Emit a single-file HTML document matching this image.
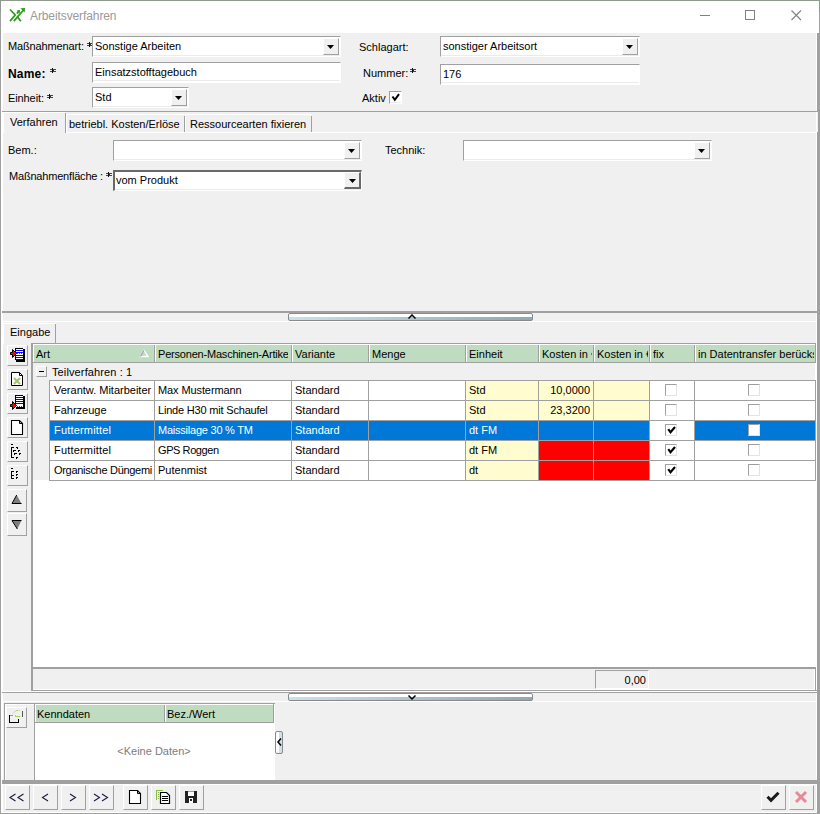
<!DOCTYPE html><html><head><meta charset="utf-8"><style>
*{margin:0;padding:0}
html,body{width:820px;height:814px;overflow:hidden;background:#8e9a8e;position:relative;font-family:"Liberation Sans",sans-serif;font-size:11px;color:#000}
div{position:absolute}
.t{white-space:nowrap;line-height:13px;font-size:11px}
</style></head><body>
<div style="left:1px;top:1px;width:818px;height:812px;background:#fff"></div>
<div style="left:0px;top:12px;width:1px;height:802px;background:#a0a0a0"></div>
<div style="left:819px;top:12px;width:1px;height:802px;background:#a0a0a0"></div>
<div style="left:817px;top:33px;width:2px;height:781px;background:#a0a0a0"></div>
<div style="left:0px;top:813px;width:820px;height:1px;background:#a0a0a0"></div>
<div style="left:3px;top:33px;width:813px;height:779px;background:#f0f0f0"></div>
<svg width="30" height="30" style="position:absolute;left:0;top:0">
<g stroke="#2f9b1f" stroke-width="1.8" fill="none" stroke-linecap="butt">
<path d="M10 9.5L15.2 15L10 21.2"/><path d="M13.8 21.2L23.5 10"/><path d="M17.2 16.5L20.8 21.2"/><path d="M16.8 13.5L19.5 11"/>
</g><path d="M25 8L20.5 8.3L24.7 12.5Z" fill="#2f9b1f"/><path d="M16.5 10.5L20 10L19.5 13.5Z" fill="#2f9b1f"/>
</svg>
<div class="t" style="left:30px;top:9px;font-size:12px;letter-spacing:-0.1px;line-height:15px;color:#9a9a9a">Arbeitsverfahren</div>
<div style="left:700px;top:15px;width:10px;height:1px;background:#808080"></div>
<div style="left:745px;top:10px;width:10px;height:10px;border:1px solid #808080;box-sizing:border-box"></div>
<svg width="12" height="12" style="position:absolute;left:790px;top:9px"><path d="M1.5 1.5L11 11M11 1.5L1.5 11" stroke="#808080" stroke-width="1.1"/></svg>
<div class="t" style="left:8px;top:40px;letter-spacing:-0.14px">Maßnahmenart:</div>
<svg width="6" height="5" style="position:absolute;left:87px;top:42px" shape-rendering="crispEdges"><path d="M2 0h1v5h-1z" fill="#111"/><path d="M0 1h2v1h-2zM3 1h3v1h-3zM0 3h2v1h-2zM3 3h3v1h-3z" fill="#444"/><path d="M3 2h1v1h-1z" fill="#333"/></svg>
<div style="left:92px;top:36px;width:249px;height:21px;background:#fff;border-top:1px solid #a0a0a0;border-left:1px solid #a0a0a0;border-bottom:1px solid #fff;border-right:1px solid #fff;box-sizing:border-box"></div>
<div style="left:93px;top:55px;width:247px;height:1px;background:#ebebeb"></div>
<div style="left:323px;top:38px;width:16px;height:17px;background:#f0f0f0;border-top:1px solid #fff;border-left:1px solid #fff;border-bottom:1px solid #a0a0a0;border-right:1px solid #a0a0a0;box-sizing:border-box"></div>
<svg width="7" height="4" style="position:absolute;left:327px;top:45px"><path d="M0 0H7L3.5 4Z" fill="#000"/></svg>
<div class="t" style="left:95px;top:40px;">Sonstige Arbeiten</div>
<div class="t" style="left:8px;top:67px;font-weight:bold;font-size:12px;line-height:14px;letter-spacing:0.2px">Name:</div>
<svg width="6" height="5" style="position:absolute;left:50px;top:68px" shape-rendering="crispEdges"><path d="M2 0h1v5h-1z" fill="#111"/><path d="M0 1h2v1h-2zM3 1h3v1h-3zM0 3h2v1h-2zM3 3h3v1h-3z" fill="#444"/><path d="M3 2h1v1h-1z" fill="#333"/></svg>
<div style="left:92px;top:62px;width:249px;height:21px;background:#fff;border-top:1px solid #a0a0a0;border-left:1px solid #a0a0a0;border-bottom:1px solid #fff;border-right:1px solid #fff;box-sizing:border-box"></div>
<div style="left:93px;top:80px;width:247px;height:1px;background:#ebebeb"></div>
<div class="t" style="left:95px;top:66px;">Einsatzstofftagebuch</div>
<div class="t" style="left:8px;top:92px;letter-spacing:-0.1px">Einheit:</div>
<svg width="6" height="5" style="position:absolute;left:47px;top:94px" shape-rendering="crispEdges"><path d="M2 0h1v5h-1z" fill="#111"/><path d="M0 1h2v1h-2zM3 1h3v1h-3zM0 3h2v1h-2zM3 3h3v1h-3z" fill="#444"/><path d="M3 2h1v1h-1z" fill="#333"/></svg>
<div style="left:92px;top:87px;width:97px;height:21px;background:#fff;border-top:1px solid #a0a0a0;border-left:1px solid #a0a0a0;border-bottom:1px solid #fff;border-right:1px solid #fff;box-sizing:border-box"></div>
<div style="left:93px;top:106px;width:95px;height:1px;background:#ebebeb"></div>
<div style="left:171px;top:89px;width:16px;height:17px;background:#f0f0f0;border-top:1px solid #fff;border-left:1px solid #fff;border-bottom:1px solid #a0a0a0;border-right:1px solid #a0a0a0;box-sizing:border-box"></div>
<svg width="7" height="4" style="position:absolute;left:175px;top:96px"><path d="M0 0H7L3.5 4Z" fill="#000"/></svg>
<div class="t" style="left:95px;top:91px;">Std</div>
<div class="t" style="left:359px;top:41px;">Schlagart:</div>
<div style="left:440px;top:36px;width:200px;height:21px;background:#fff;border-top:1px solid #a0a0a0;border-left:1px solid #a0a0a0;border-bottom:1px solid #fff;border-right:1px solid #fff;box-sizing:border-box"></div>
<div style="left:441px;top:55px;width:198px;height:1px;background:#ebebeb"></div>
<div style="left:622px;top:38px;width:16px;height:17px;background:#f0f0f0;border-top:1px solid #fff;border-left:1px solid #fff;border-bottom:1px solid #a0a0a0;border-right:1px solid #a0a0a0;box-sizing:border-box"></div>
<svg width="7" height="4" style="position:absolute;left:626px;top:45px"><path d="M0 0H7L3.5 4Z" fill="#000"/></svg>
<div class="t" style="left:443px;top:40px;">sonstiger Arbeitsort</div>
<div class="t" style="left:363px;top:67px;">Nummer:</div>
<svg width="6" height="5" style="position:absolute;left:410px;top:68px" shape-rendering="crispEdges"><path d="M2 0h1v5h-1z" fill="#111"/><path d="M0 1h2v1h-2zM3 1h3v1h-3zM0 3h2v1h-2zM3 3h3v1h-3z" fill="#444"/><path d="M3 2h1v1h-1z" fill="#333"/></svg>
<div style="left:440px;top:64px;width:200px;height:21px;background:#fff;border-top:1px solid #a0a0a0;border-left:1px solid #a0a0a0;border-bottom:1px solid #fff;border-right:1px solid #fff;box-sizing:border-box"></div>
<div style="left:441px;top:82px;width:198px;height:1px;background:#ebebeb"></div>
<div class="t" style="left:443px;top:68px;">176</div>
<div class="t" style="left:362px;top:92px;">Aktiv</div>
<div style="left:389px;top:91px;width:13px;height:13px;background:#fff;border-top:1px solid #a0a0a0;border-left:1px solid #a0a0a0;border-bottom:1px solid #fff;border-right:1px solid #fff;box-sizing:border-box"></div>
<div style="left:390px;top:102px;width:11px;height:1px;background:#ebebeb"></div>
<svg width="9" height="9" style="position:absolute;left:391px;top:93px"><path d="M1.5 3.5L3.8 6.8L8 1.2" stroke="#000" stroke-width="2" fill="none"/></svg>
<div style="left:2px;top:111px;width:817px;height:1px;background:#a0a0a0"></div>
<div style="left:817px;top:112px;width:1px;height:20px;background:#f0f0f0"></div>
<div style="left:65px;top:132px;width:752px;height:1px;background:#fff"></div>
<div style="left:3px;top:112px;width:62px;height:1px;background:#fff"></div>
<div style="left:3px;top:112px;width:1px;height:21px;background:#fff"></div>
<div style="left:65px;top:113px;width:1px;height:20px;background:#a0a0a0"></div>
<div class="t" style="left:10px;top:116px;">Verfahren</div>
<div style="left:66px;top:114px;width:118px;height:1px;background:#fff"></div>
<div style="left:66px;top:114px;width:1px;height:18px;background:#fff"></div>
<div style="left:184px;top:116px;width:1px;height:16px;background:#a0a0a0"></div>
<div class="t" style="left:69px;top:118px;">betriebl. Kosten/Erlöse</div>
<div style="left:185px;top:114px;width:126px;height:1px;background:#fff"></div>
<div style="left:185px;top:114px;width:1px;height:18px;background:#fff"></div>
<div style="left:311px;top:116px;width:1px;height:16px;background:#a0a0a0"></div>
<div class="t" style="left:190px;top:118px;">Ressourcearten fixieren</div>
<div class="t" style="left:8px;top:144px;">Bem.:</div>
<div style="left:113px;top:140px;width:249px;height:21px;background:#fff;border-top:1px solid #a0a0a0;border-left:1px solid #a0a0a0;border-bottom:1px solid #fff;border-right:1px solid #fff;box-sizing:border-box"></div>
<div style="left:114px;top:159px;width:247px;height:1px;background:#ebebeb"></div>
<div style="left:344px;top:142px;width:16px;height:17px;background:#f0f0f0;border-top:1px solid #fff;border-left:1px solid #fff;border-bottom:1px solid #a0a0a0;border-right:1px solid #a0a0a0;box-sizing:border-box"></div>
<svg width="7" height="4" style="position:absolute;left:348px;top:149px"><path d="M0 0H7L3.5 4Z" fill="#000"/></svg>
<div class="t" style="left:385px;top:144px;">Technik:</div>
<div style="left:463px;top:140px;width:249px;height:21px;background:#fff;border-top:1px solid #a0a0a0;border-left:1px solid #a0a0a0;border-bottom:1px solid #fff;border-right:1px solid #fff;box-sizing:border-box"></div>
<div style="left:464px;top:159px;width:247px;height:1px;background:#ebebeb"></div>
<div style="left:694px;top:142px;width:16px;height:17px;background:#f0f0f0;border-top:1px solid #fff;border-left:1px solid #fff;border-bottom:1px solid #a0a0a0;border-right:1px solid #a0a0a0;box-sizing:border-box"></div>
<svg width="7" height="4" style="position:absolute;left:698px;top:149px"><path d="M0 0H7L3.5 4Z" fill="#000"/></svg>
<div class="t" style="left:9px;top:170px;letter-spacing:-0.19px">Maßnahmenfläche :</div>
<svg width="6" height="5" style="position:absolute;left:106px;top:172px" shape-rendering="crispEdges"><path d="M2 0h1v5h-1z" fill="#111"/><path d="M0 1h2v1h-2zM3 1h3v1h-3zM0 3h2v1h-2zM3 3h3v1h-3z" fill="#444"/><path d="M3 2h1v1h-1z" fill="#333"/></svg>
<div style="left:113px;top:170px;width:249px;height:21px;background:#fff;border-top:2px solid #696969;border-left:2px solid #696969;border-bottom:1px solid #fff;border-right:1px solid #fff;box-sizing:border-box"></div>
<div style="left:115px;top:189px;width:246px;height:1px;background:#ebebeb"></div>
<div style="left:344px;top:172px;width:17px;height:17px;background:#f0f0f0;border-top:1px solid #fff;border-left:1px solid #fff;border-bottom:2px solid #696969;border-right:2px solid #696969;box-sizing:border-box"></div>
<svg width="7" height="4" style="position:absolute;left:349px;top:179px"><path d="M0 0H7L3.5 4Z" fill="#000"/></svg>
<div class="t" style="left:116px;top:174px;">vom Produkt</div>
<div style="left:2px;top:311px;width:815px;height:2px;background:#a0a0a0"></div>
<div style="left:2px;top:321px;width:815px;height:1px;background:#fff"></div>
<div style="left:288px;top:313px;width:245px;height:8px;box-sizing:border-box;border:1px solid #8a8a8a;border-radius:2px;background:linear-gradient(to bottom,#fff 0,#fff 3px,transparent 3px),linear-gradient(to right,#c8e2f2,#8ea8b6)"></div>
<svg width="8" height="5" style="position:absolute;left:408px;top:314px"><path d="M0.5 4.5L4 1L7.5 4.5" stroke="#000" stroke-width="1.5" fill="none"/></svg>
<div style="left:3px;top:323px;width:53px;height:21px;background:#f0f0f0;border-left:1px solid #fff;border-top:1px solid #fff;box-sizing:border-box"></div>
<div style="left:55px;top:324px;width:1px;height:19px;background:#a0a0a0"></div>
<div class="t" style="left:10px;top:326px;">Eingabe</div>
<div style="left:31px;top:343px;width:786px;height:349px;background:#fff;border-left:2px solid #a0a0a0;box-sizing:border-box"></div>
<div style="left:31px;top:343px;width:785px;height:1px;background:#a0a0a0"></div>
<div style="left:815px;top:343px;width:1px;height:20px;background:#a0a0a0"></div>
<div style="left:33px;top:344px;width:782px;height:1px;background:#fff"></div>
<div style="left:34px;top:345px;width:781px;height:17px;background:#c0dcc0"></div>
<div style="left:33px;top:362px;width:782px;height:1px;background:#a0a0a0"></div>
<div style="left:154px;top:345px;width:1px;height:17px;background:#a0a0a0"></div>
<div style="left:155px;top:345px;width:1px;height:17px;background:#fff"></div>
<div style="left:291px;top:345px;width:1px;height:17px;background:#a0a0a0"></div>
<div style="left:292px;top:345px;width:1px;height:17px;background:#fff"></div>
<div style="left:368px;top:345px;width:1px;height:17px;background:#a0a0a0"></div>
<div style="left:369px;top:345px;width:1px;height:17px;background:#fff"></div>
<div style="left:465px;top:345px;width:1px;height:17px;background:#a0a0a0"></div>
<div style="left:466px;top:345px;width:1px;height:17px;background:#fff"></div>
<div style="left:538px;top:345px;width:1px;height:17px;background:#a0a0a0"></div>
<div style="left:539px;top:345px;width:1px;height:17px;background:#fff"></div>
<div style="left:593px;top:345px;width:1px;height:17px;background:#a0a0a0"></div>
<div style="left:594px;top:345px;width:1px;height:17px;background:#fff"></div>
<div style="left:649px;top:345px;width:1px;height:17px;background:#a0a0a0"></div>
<div style="left:650px;top:345px;width:1px;height:17px;background:#fff"></div>
<div style="left:694px;top:345px;width:1px;height:17px;background:#a0a0a0"></div>
<div style="left:695px;top:345px;width:1px;height:17px;background:#fff"></div>
<div style="left:34px;top:348px;width:119px;height:13px;overflow:hidden"><div class="t" style="left:2px;top:0;letter-spacing:0px">Art</div></div>
<div style="left:156px;top:348px;width:132px;height:13px;overflow:hidden"><div class="t" style="left:2px;top:0;letter-spacing:-0.2px">Personen-Maschinen-Artikel</div></div>
<div style="left:293px;top:348px;width:74px;height:13px;overflow:hidden"><div class="t" style="left:2px;top:0;letter-spacing:0px">Variante</div></div>
<div style="left:370px;top:348px;width:94px;height:13px;overflow:hidden"><div class="t" style="left:2px;top:0;letter-spacing:0px">Menge</div></div>
<div style="left:467px;top:348px;width:70px;height:13px;overflow:hidden"><div class="t" style="left:2px;top:0;letter-spacing:0px">Einheit</div></div>
<div style="left:540px;top:348px;width:52px;height:13px;overflow:hidden"><div class="t" style="left:2px;top:0;letter-spacing:0px">Kosten in €</div></div>
<div style="left:595px;top:348px;width:53px;height:13px;overflow:hidden"><div class="t" style="left:2px;top:0;letter-spacing:0px">Kosten in €</div></div>
<div style="left:651px;top:348px;width:42px;height:13px;overflow:hidden"><div class="t" style="left:2px;top:0;letter-spacing:0px">fix</div></div>
<div style="left:696px;top:348px;width:118px;height:13px;overflow:hidden"><div class="t" style="left:2px;top:0;letter-spacing:0px">in Datentransfer berücksichtigen</div></div>
<svg width="10" height="9" style="position:absolute;left:139px;top:349px"><path d="M9 7.5H1.5L5 1.5Z" fill="none" stroke="#fff" stroke-width="1.3"/><path d="M1.5 7.5L5 1.5" stroke="#9a9a9a" stroke-width="1.1" fill="none"/></svg>
<div style="left:33px;top:363px;width:782px;height:17px;background:#f0f0f0"></div>
<div style="left:36px;top:366px;width:11px;height:11px;background:#f0f0f0;border-top:1px solid #fff;border-left:1px solid #fff;border-bottom:1px solid #a0a0a0;border-right:1px solid #a0a0a0;box-sizing:border-box"></div>
<div style="left:39px;top:371px;width:5px;height:1px;background:#000"></div>
<div class="t" style="left:52px;top:366px;letter-spacing:0.12px">Teilverfahren : 1</div>
<div style="left:33px;top:380px;width:16px;height:100px;background:#f0f0f0"></div>
<div style="left:50px;top:381px;width:104px;height:19px;background:#fff"></div>
<div style="left:155px;top:381px;width:136px;height:19px;background:#fff"></div>
<div style="left:292px;top:381px;width:76px;height:19px;background:#fff"></div>
<div style="left:369px;top:381px;width:96px;height:19px;background:#fff"></div>
<div style="left:466px;top:381px;width:72px;height:19px;background:#fffdcf"></div>
<div style="left:539px;top:381px;width:54px;height:19px;background:#fffdcf"></div>
<div style="left:594px;top:381px;width:55px;height:19px;background:#fffdcf"></div>
<div style="left:650px;top:381px;width:44px;height:19px;background:#fff"></div>
<div style="left:695px;top:381px;width:120px;height:19px;background:#fff"></div>
<div style="left:49px;top:380px;width:767px;height:1px;background:#a0a0a0"></div>
<div style="left:49px;top:380px;width:1px;height:20px;background:#a0a0a0"></div>
<div style="left:154px;top:380px;width:1px;height:20px;background:#a0a0a0"></div>
<div style="left:291px;top:380px;width:1px;height:20px;background:#a0a0a0"></div>
<div style="left:368px;top:380px;width:1px;height:20px;background:#a0a0a0"></div>
<div style="left:465px;top:380px;width:1px;height:20px;background:#a0a0a0"></div>
<div style="left:538px;top:380px;width:1px;height:20px;background:#a0a0a0"></div>
<div style="left:593px;top:380px;width:1px;height:20px;background:#a0a0a0"></div>
<div style="left:649px;top:380px;width:1px;height:20px;background:#a0a0a0"></div>
<div style="left:694px;top:380px;width:1px;height:20px;background:#a0a0a0"></div>
<div style="left:50px;top:384px;width:102px;height:13px;overflow:hidden"><div class="t" style="left:4px;top:0;color:#000;letter-spacing:0px">Verantw. Mitarbeiter</div></div>
<div style="left:155px;top:384px;width:134px;height:13px;overflow:hidden"><div class="t" style="left:3px;top:0;color:#000;letter-spacing:-0.1px">Max Mustermann</div></div>
<div style="left:292px;top:384px;width:74px;height:13px;overflow:hidden"><div class="t" style="left:3px;top:0;color:#000;letter-spacing:0px">Standard</div></div>
<div style="left:369px;top:384px;width:94px;height:13px;overflow:hidden"><div class="t" style="left:3px;top:0;color:#000;letter-spacing:0px"></div></div>
<div class="t" style="left:469px;top:384px;color:#000">Std</div>
<div class="t" style="left:539px;top:384px;width:51px;text-align:right;color:#000">10,0000</div>
<div style="left:665px;top:384px;width:12px;height:12px;background:#fff;border-top:1px solid #a0a0a0;border-left:1px solid #a0a0a0;border-bottom:1px solid #e3e3e3;border-right:1px solid #e3e3e3;box-sizing:border-box"></div>
<div style="left:748px;top:384px;width:12px;height:12px;background:#fff;border-top:1px solid #a0a0a0;border-left:1px solid #a0a0a0;border-bottom:1px solid #e3e3e3;border-right:1px solid #e3e3e3;box-sizing:border-box"></div>
<div style="left:50px;top:401px;width:104px;height:19px;background:#fff"></div>
<div style="left:155px;top:401px;width:136px;height:19px;background:#fff"></div>
<div style="left:292px;top:401px;width:76px;height:19px;background:#fff"></div>
<div style="left:369px;top:401px;width:96px;height:19px;background:#fff"></div>
<div style="left:466px;top:401px;width:72px;height:19px;background:#fffdcf"></div>
<div style="left:539px;top:401px;width:54px;height:19px;background:#fffdcf"></div>
<div style="left:594px;top:401px;width:55px;height:19px;background:#fffdcf"></div>
<div style="left:650px;top:401px;width:44px;height:19px;background:#fff"></div>
<div style="left:695px;top:401px;width:120px;height:19px;background:#fff"></div>
<div style="left:49px;top:400px;width:767px;height:1px;background:#a0a0a0"></div>
<div style="left:49px;top:400px;width:1px;height:20px;background:#a0a0a0"></div>
<div style="left:154px;top:400px;width:1px;height:20px;background:#a0a0a0"></div>
<div style="left:291px;top:400px;width:1px;height:20px;background:#a0a0a0"></div>
<div style="left:368px;top:400px;width:1px;height:20px;background:#a0a0a0"></div>
<div style="left:465px;top:400px;width:1px;height:20px;background:#a0a0a0"></div>
<div style="left:538px;top:400px;width:1px;height:20px;background:#a0a0a0"></div>
<div style="left:593px;top:400px;width:1px;height:20px;background:#a0a0a0"></div>
<div style="left:649px;top:400px;width:1px;height:20px;background:#a0a0a0"></div>
<div style="left:694px;top:400px;width:1px;height:20px;background:#a0a0a0"></div>
<div style="left:50px;top:404px;width:102px;height:13px;overflow:hidden"><div class="t" style="left:4px;top:0;color:#000;letter-spacing:0px">Fahrzeuge</div></div>
<div style="left:155px;top:404px;width:134px;height:13px;overflow:hidden"><div class="t" style="left:3px;top:0;color:#000;letter-spacing:-0.19px">Linde H30 mit Schaufel</div></div>
<div style="left:292px;top:404px;width:74px;height:13px;overflow:hidden"><div class="t" style="left:3px;top:0;color:#000;letter-spacing:0px">Standard</div></div>
<div style="left:369px;top:404px;width:94px;height:13px;overflow:hidden"><div class="t" style="left:3px;top:0;color:#000;letter-spacing:0px"></div></div>
<div class="t" style="left:469px;top:404px;color:#000">Std</div>
<div class="t" style="left:539px;top:404px;width:51px;text-align:right;color:#000">23,3200</div>
<div style="left:665px;top:404px;width:12px;height:12px;background:#fff;border-top:1px solid #a0a0a0;border-left:1px solid #a0a0a0;border-bottom:1px solid #e3e3e3;border-right:1px solid #e3e3e3;box-sizing:border-box"></div>
<div style="left:748px;top:404px;width:12px;height:12px;background:#fff;border-top:1px solid #a0a0a0;border-left:1px solid #a0a0a0;border-bottom:1px solid #e3e3e3;border-right:1px solid #e3e3e3;box-sizing:border-box"></div>
<div style="left:50px;top:421px;width:104px;height:19px;background:#0078d7"></div>
<div style="left:155px;top:421px;width:136px;height:19px;background:#0078d7"></div>
<div style="left:292px;top:421px;width:76px;height:19px;background:#0078d7"></div>
<div style="left:369px;top:421px;width:96px;height:19px;background:#0078d7"></div>
<div style="left:466px;top:421px;width:72px;height:19px;background:#0078d7"></div>
<div style="left:539px;top:421px;width:54px;height:19px;background:#0078d7"></div>
<div style="left:594px;top:421px;width:55px;height:19px;background:#0078d7"></div>
<div style="left:650px;top:421px;width:44px;height:19px;background:#fff"></div>
<div style="left:695px;top:421px;width:120px;height:19px;background:#0078d7"></div>
<div style="left:49px;top:420px;width:767px;height:1px;background:#a0a0a0"></div>
<div style="left:49px;top:420px;width:1px;height:20px;background:#a0a0a0"></div>
<div style="left:154px;top:420px;width:1px;height:20px;background:#a0a0a0"></div>
<div style="left:291px;top:420px;width:1px;height:20px;background:#a0a0a0"></div>
<div style="left:368px;top:420px;width:1px;height:20px;background:#a0a0a0"></div>
<div style="left:465px;top:420px;width:1px;height:20px;background:#a0a0a0"></div>
<div style="left:538px;top:420px;width:1px;height:20px;background:#a0a0a0"></div>
<div style="left:593px;top:420px;width:1px;height:20px;background:#a0a0a0"></div>
<div style="left:649px;top:420px;width:1px;height:20px;background:#a0a0a0"></div>
<div style="left:694px;top:420px;width:1px;height:20px;background:#a0a0a0"></div>
<div style="left:50px;top:424px;width:102px;height:13px;overflow:hidden"><div class="t" style="left:4px;top:0;color:#fff;letter-spacing:0.18px">Futtermittel</div></div>
<div style="left:155px;top:424px;width:134px;height:13px;overflow:hidden"><div class="t" style="left:3px;top:0;color:#fff;letter-spacing:-0.23px">Maissilage 30 % TM</div></div>
<div style="left:292px;top:424px;width:74px;height:13px;overflow:hidden"><div class="t" style="left:3px;top:0;color:#fff;letter-spacing:0px">Standard</div></div>
<div style="left:369px;top:424px;width:94px;height:13px;overflow:hidden"><div class="t" style="left:3px;top:0;color:#fff;letter-spacing:0px"></div></div>
<div class="t" style="left:469px;top:424px;color:#fff">dt FM</div>
<div style="left:665px;top:424px;width:12px;height:12px;background:#fff;border-top:1px solid #a0a0a0;border-left:1px solid #a0a0a0;border-bottom:1px solid #e3e3e3;border-right:1px solid #e3e3e3;box-sizing:border-box"></div>
<svg width="10" height="10" style="position:absolute;left:667px;top:426px"><path d="M1.3 3.2L3.5 6.3L8 1" stroke="#000" stroke-width="2.1" fill="none"/></svg>
<div style="left:748px;top:424px;width:12px;height:12px;background:#fff;border-top:1px solid #a0a0a0;border-left:1px solid #a0a0a0;border-bottom:1px solid #e3e3e3;border-right:1px solid #e3e3e3;box-sizing:border-box"></div>
<div style="left:50px;top:441px;width:104px;height:19px;background:#fff"></div>
<div style="left:155px;top:441px;width:136px;height:19px;background:#fff"></div>
<div style="left:292px;top:441px;width:76px;height:19px;background:#fff"></div>
<div style="left:369px;top:441px;width:96px;height:19px;background:#fff"></div>
<div style="left:466px;top:441px;width:72px;height:19px;background:#fffdcf"></div>
<div style="left:539px;top:441px;width:54px;height:19px;background:#ff0000"></div>
<div style="left:594px;top:441px;width:55px;height:19px;background:#ff0000"></div>
<div style="left:650px;top:441px;width:44px;height:19px;background:#fff"></div>
<div style="left:695px;top:441px;width:120px;height:19px;background:#fff"></div>
<div style="left:49px;top:440px;width:767px;height:1px;background:#a0a0a0"></div>
<div style="left:49px;top:440px;width:1px;height:20px;background:#a0a0a0"></div>
<div style="left:154px;top:440px;width:1px;height:20px;background:#a0a0a0"></div>
<div style="left:291px;top:440px;width:1px;height:20px;background:#a0a0a0"></div>
<div style="left:368px;top:440px;width:1px;height:20px;background:#a0a0a0"></div>
<div style="left:465px;top:440px;width:1px;height:20px;background:#a0a0a0"></div>
<div style="left:538px;top:440px;width:1px;height:20px;background:#a0a0a0"></div>
<div style="left:593px;top:440px;width:1px;height:20px;background:#a0a0a0"></div>
<div style="left:649px;top:440px;width:1px;height:20px;background:#a0a0a0"></div>
<div style="left:694px;top:440px;width:1px;height:20px;background:#a0a0a0"></div>
<div style="left:50px;top:444px;width:102px;height:13px;overflow:hidden"><div class="t" style="left:4px;top:0;color:#000;letter-spacing:0.18px">Futtermittel</div></div>
<div style="left:155px;top:444px;width:134px;height:13px;overflow:hidden"><div class="t" style="left:3px;top:0;color:#000;letter-spacing:-0.42px">GPS Roggen</div></div>
<div style="left:292px;top:444px;width:74px;height:13px;overflow:hidden"><div class="t" style="left:3px;top:0;color:#000;letter-spacing:0px">Standard</div></div>
<div style="left:369px;top:444px;width:94px;height:13px;overflow:hidden"><div class="t" style="left:3px;top:0;color:#000;letter-spacing:0px"></div></div>
<div class="t" style="left:469px;top:444px;color:#000">dt FM</div>
<div style="left:665px;top:444px;width:12px;height:12px;background:#fff;border-top:1px solid #a0a0a0;border-left:1px solid #a0a0a0;border-bottom:1px solid #e3e3e3;border-right:1px solid #e3e3e3;box-sizing:border-box"></div>
<svg width="10" height="10" style="position:absolute;left:667px;top:446px"><path d="M1.3 3.2L3.5 6.3L8 1" stroke="#000" stroke-width="2.1" fill="none"/></svg>
<div style="left:748px;top:444px;width:12px;height:12px;background:#fff;border-top:1px solid #a0a0a0;border-left:1px solid #a0a0a0;border-bottom:1px solid #e3e3e3;border-right:1px solid #e3e3e3;box-sizing:border-box"></div>
<div style="left:50px;top:461px;width:104px;height:19px;background:#fff"></div>
<div style="left:155px;top:461px;width:136px;height:19px;background:#fff"></div>
<div style="left:292px;top:461px;width:76px;height:19px;background:#fff"></div>
<div style="left:369px;top:461px;width:96px;height:19px;background:#fff"></div>
<div style="left:466px;top:461px;width:72px;height:19px;background:#fffdcf"></div>
<div style="left:539px;top:461px;width:54px;height:19px;background:#ff0000"></div>
<div style="left:594px;top:461px;width:55px;height:19px;background:#ff0000"></div>
<div style="left:650px;top:461px;width:44px;height:19px;background:#fff"></div>
<div style="left:695px;top:461px;width:120px;height:19px;background:#fff"></div>
<div style="left:49px;top:460px;width:767px;height:1px;background:#a0a0a0"></div>
<div style="left:49px;top:460px;width:1px;height:20px;background:#a0a0a0"></div>
<div style="left:154px;top:460px;width:1px;height:20px;background:#a0a0a0"></div>
<div style="left:291px;top:460px;width:1px;height:20px;background:#a0a0a0"></div>
<div style="left:368px;top:460px;width:1px;height:20px;background:#a0a0a0"></div>
<div style="left:465px;top:460px;width:1px;height:20px;background:#a0a0a0"></div>
<div style="left:538px;top:460px;width:1px;height:20px;background:#a0a0a0"></div>
<div style="left:593px;top:460px;width:1px;height:20px;background:#a0a0a0"></div>
<div style="left:649px;top:460px;width:1px;height:20px;background:#a0a0a0"></div>
<div style="left:694px;top:460px;width:1px;height:20px;background:#a0a0a0"></div>
<div style="left:50px;top:464px;width:102px;height:13px;overflow:hidden"><div class="t" style="left:4px;top:0;color:#000;letter-spacing:-0.3px">Organische Düngemittel</div></div>
<div style="left:155px;top:464px;width:134px;height:13px;overflow:hidden"><div class="t" style="left:3px;top:0;color:#000;letter-spacing:0px">Putenmist</div></div>
<div style="left:292px;top:464px;width:74px;height:13px;overflow:hidden"><div class="t" style="left:3px;top:0;color:#000;letter-spacing:0px">Standard</div></div>
<div style="left:369px;top:464px;width:94px;height:13px;overflow:hidden"><div class="t" style="left:3px;top:0;color:#000;letter-spacing:0px"></div></div>
<div class="t" style="left:469px;top:464px;color:#000">dt</div>
<div style="left:665px;top:464px;width:12px;height:12px;background:#fff;border-top:1px solid #a0a0a0;border-left:1px solid #a0a0a0;border-bottom:1px solid #e3e3e3;border-right:1px solid #e3e3e3;box-sizing:border-box"></div>
<svg width="10" height="10" style="position:absolute;left:667px;top:466px"><path d="M1.3 3.2L3.5 6.3L8 1" stroke="#000" stroke-width="2.1" fill="none"/></svg>
<div style="left:748px;top:464px;width:12px;height:12px;background:#fff;border-top:1px solid #a0a0a0;border-left:1px solid #a0a0a0;border-bottom:1px solid #e3e3e3;border-right:1px solid #e3e3e3;box-sizing:border-box"></div>
<div style="left:49px;top:480px;width:767px;height:1px;background:#a0a0a0"></div>
<div style="left:815px;top:380px;width:1px;height:100px;background:#a0a0a0"></div>
<div style="left:33px;top:667px;width:783px;height:2px;background:#a0a0a0"></div>
<div style="left:33px;top:669px;width:783px;height:21px;background:#f0f0f0"></div>
<div style="left:595px;top:670px;width:54px;height:19px;background:#f0f0f0;border-top:1px solid #a0a0a0;border-left:1px solid #a0a0a0;border-bottom:1px solid #fff;border-right:1px solid #fff;box-sizing:border-box"></div>
<div class="t" style="left:595px;top:674px;width:51px;text-align:right">0,00</div>
<div style="left:31px;top:690px;width:786px;height:1px;background:#a0a0a0"></div>
<div style="left:815px;top:667px;width:1px;height:24px;background:#a0a0a0"></div>
<div style="left:814px;top:669px;width:1px;height:21px;background:#fff"></div>
<div style="left:33px;top:689px;width:782px;height:1px;background:#fff"></div>
<div style="left:7px;top:345px;width:21px;height:21px;background:#f0f0f0;border-top:1px solid #fff;border-left:1px solid #fff;border-bottom:1px solid #a0a0a0;border-right:1px solid #a0a0a0;box-sizing:border-box"></div>
<div style="left:7px;top:369px;width:21px;height:21px;background:#f0f0f0;border-top:1px solid #fff;border-left:1px solid #fff;border-bottom:1px solid #a0a0a0;border-right:1px solid #a0a0a0;box-sizing:border-box"></div>
<div style="left:7px;top:393px;width:21px;height:21px;background:#f0f0f0;border-top:1px solid #fff;border-left:1px solid #fff;border-bottom:1px solid #a0a0a0;border-right:1px solid #a0a0a0;box-sizing:border-box"></div>
<div style="left:7px;top:417px;width:21px;height:21px;background:#f0f0f0;border-top:1px solid #fff;border-left:1px solid #fff;border-bottom:1px solid #a0a0a0;border-right:1px solid #a0a0a0;box-sizing:border-box"></div>
<div style="left:7px;top:441px;width:21px;height:21px;background:#f0f0f0;border-top:1px solid #fff;border-left:1px solid #fff;border-bottom:1px solid #a0a0a0;border-right:1px solid #a0a0a0;box-sizing:border-box"></div>
<div style="left:7px;top:465px;width:21px;height:21px;background:#f0f0f0;border-top:1px solid #fff;border-left:1px solid #fff;border-bottom:1px solid #a0a0a0;border-right:1px solid #a0a0a0;box-sizing:border-box"></div>
<div style="left:7px;top:489px;width:20px;height:23px;background:#f0f0f0;border-top:1px solid #fff;border-left:1px solid #fff;border-bottom:1px solid #a0a0a0;border-right:1px solid #a0a0a0;box-sizing:border-box"></div>
<div style="left:7px;top:513px;width:20px;height:23px;background:#f0f0f0;border-top:1px solid #fff;border-left:1px solid #fff;border-bottom:1px solid #a0a0a0;border-right:1px solid #a0a0a0;box-sizing:border-box"></div>
<div style="left:2px;top:691px;width:815px;height:1px;background:#fff"></div>
<div style="left:2px;top:692px;width:815px;height:1px;background:#a0a0a0"></div>
<div style="left:288px;top:693px;width:245px;height:8px;box-sizing:border-box;border:1px solid #8a8a8a;border-radius:2px;background:linear-gradient(to bottom,#fff 0,#fff 3px,transparent 3px),linear-gradient(to right,#c8e2f2,#8ea8b6)"></div>
<svg width="8" height="5" style="position:absolute;left:408px;top:695px"><path d="M0.5 0.5L4 4L7.5 0.5" stroke="#000" stroke-width="1.5" fill="none"/></svg>
<div style="left:2px;top:701px;width:815px;height:1px;background:#fff"></div>
<div style="left:4px;top:703px;width:30px;height:77px;border-top:1px solid #a0a0a0;border-left:1px solid #a0a0a0;box-sizing:border-box"></div>
<div style="left:5px;top:704px;width:29px;height:1px;background:#fff"></div>
<div style="left:5px;top:704px;width:1px;height:76px;background:#fff"></div>
<div style="left:6px;top:707px;width:21px;height:21px;background:#f0f0f0;border-top:1px solid #fff;border-left:1px solid #fff;border-bottom:1px solid #a0a0a0;border-right:1px solid #a0a0a0;box-sizing:border-box"></div>
<div style="left:34px;top:703px;width:241px;height:77px;background:#fff;border-top:1px solid #a0a0a0;border-left:1px solid #a0a0a0;box-sizing:border-box"></div>
<div style="left:35px;top:704px;width:240px;height:1px;background:#fff"></div>
<div style="left:36px;top:705px;width:237px;height:17px;background:#c0dcc0"></div>
<div style="left:35px;top:722px;width:239px;height:1px;background:#a0a0a0"></div>
<div style="left:273px;top:704px;width:1px;height:19px;background:#a0a0a0"></div>
<div style="left:164px;top:705px;width:1px;height:17px;background:#a0a0a0"></div>
<div style="left:165px;top:705px;width:1px;height:17px;background:#fff"></div>
<div class="t" style="left:37px;top:708px;">Kenndaten</div>
<div class="t" style="left:167px;top:708px;">Bez./Wert</div>
<div class="t" style="left:34px;top:745px;width:240px;text-align:center;color:#7c7c7c">&lt;Keine Daten&gt;</div>
<div style="left:275px;top:731px;width:8px;height:23px;box-sizing:border-box;border:1px solid #8a8a8a;border-radius:2px;background:linear-gradient(to right,#fff 0,#fff 3px,#c8e2f2 3px)"></div>
<svg width="5" height="8" style="position:absolute;left:277px;top:738px"><path d="M4 0.5L1 4L4 7.5" stroke="#000" stroke-width="1.5" fill="none"/></svg>
<div style="left:2px;top:780px;width:815px;height:4px;background:#a0a0a0"></div>
<div style="left:2px;top:784px;width:815px;height:1px;background:#fff"></div>
<div style="left:5px;top:785px;width:25px;height:25px;background:#f0f0f0;border-top:1px solid #fff;border-left:1px solid #fff;border-bottom:1px solid #a0a0a0;border-right:1px solid #a0a0a0;box-sizing:border-box"></div>
<div style="left:33px;top:785px;width:25px;height:25px;background:#f0f0f0;border-top:1px solid #fff;border-left:1px solid #fff;border-bottom:1px solid #a0a0a0;border-right:1px solid #a0a0a0;box-sizing:border-box"></div>
<div style="left:61px;top:785px;width:25px;height:25px;background:#f0f0f0;border-top:1px solid #fff;border-left:1px solid #fff;border-bottom:1px solid #a0a0a0;border-right:1px solid #a0a0a0;box-sizing:border-box"></div>
<div style="left:89px;top:785px;width:25px;height:25px;background:#f0f0f0;border-top:1px solid #fff;border-left:1px solid #fff;border-bottom:1px solid #a0a0a0;border-right:1px solid #a0a0a0;box-sizing:border-box"></div>
<div style="left:123px;top:785px;width:25px;height:25px;background:#f0f0f0;border-top:1px solid #fff;border-left:1px solid #fff;border-bottom:1px solid #a0a0a0;border-right:1px solid #a0a0a0;box-sizing:border-box"></div>
<div style="left:151px;top:785px;width:25px;height:25px;background:#f0f0f0;border-top:1px solid #fff;border-left:1px solid #fff;border-bottom:1px solid #a0a0a0;border-right:1px solid #a0a0a0;box-sizing:border-box"></div>
<div style="left:179px;top:785px;width:25px;height:25px;background:#f0f0f0;border-top:1px solid #fff;border-left:1px solid #fff;border-bottom:1px solid #a0a0a0;border-right:1px solid #a0a0a0;box-sizing:border-box"></div>
<div style="left:761px;top:785px;width:25px;height:25px;background:#f0f0f0;border-top:1px solid #fff;border-left:1px solid #fff;border-bottom:1px solid #a0a0a0;border-right:1px solid #a0a0a0;box-sizing:border-box"></div>
<div style="left:789px;top:785px;width:25px;height:25px;background:#f0f0f0;border-top:1px solid #fff;border-left:1px solid #fff;border-bottom:1px solid #a0a0a0;border-right:1px solid #a0a0a0;box-sizing:border-box"></div>
<svg width="820" height="814" style="position:absolute;left:0;top:0"><g stroke="#1a1a40" stroke-width="1.1" fill="none"><path d="M15.5 794L10 797.5L15.5 801"/><path d="M23.5 794L18 797.5L23.5 801"/><path d="M48 794L42.5 797.5L48 801"/><path d="M70 794L75.5 797.5L70 801"/><path d="M94 794L99.5 797.5L94 801"/><path d="M102 794L107.5 797.5L102 801"/></g></svg>
<svg width="820" height="814" style="position:absolute;left:0;top:0" shape-rendering="crispEdges">
<!-- btn1: insert doc with arrow -->
<rect x="15" y="348" width="8" height="1" fill="#000"/>
<rect x="15" y="348" width="1" height="12" fill="#000"/>
<rect x="23" y="349" width="2" height="13" fill="#000"/>
<rect x="16" y="360" width="9" height="2" fill="#000"/>
<rect x="16" y="349" width="7" height="11" fill="#fff"/>
<rect x="16" y="350" width="7" height="1" fill="#0000ff"/>
<rect x="16" y="352" width="7" height="1" fill="#0000ff"/>
<rect x="16" y="355" width="7" height="1" fill="#0000ff"/>
<rect x="16" y="357" width="7" height="1" fill="#0000ff"/>
<rect x="16" y="359" width="7" height="1" fill="#0000ff"/>
<rect x="17" y="353" width="1" height="1" fill="#f00"/><rect x="19" y="353" width="1" height="1" fill="#f00"/><rect x="21" y="353" width="1" height="1" fill="#f00"/>
<path d="M10.5 352.5H12.5V349.5L16.5 353.5L12.5 357.5V354.5H10.5Z" fill="#f00" stroke="#000" stroke-width="1" shape-rendering="auto"/>
<!-- btn2: doc with green x -->
<path d="M11.5 372.5H19.5L22.5 375.5V385.5H11.5Z" fill="#fff" stroke="#000" stroke-width="1" shape-rendering="auto"/>
<path d="M19.5 372.5V375.5H22.5" fill="none" stroke="#000" stroke-width="1" shape-rendering="auto"/>
<path d="M14 378L20 384M20 378L14 384" stroke="#a3c46b" stroke-width="2" shape-rendering="auto"/>
<!-- btn3: doc with arrow at bottom -->
<rect x="15" y="395" width="8" height="1" fill="#000"/>
<rect x="15" y="395" width="1" height="12" fill="#000"/>
<rect x="23" y="396" width="2" height="13" fill="#000"/>
<rect x="16" y="407" width="9" height="2" fill="#000"/>
<rect x="16" y="396" width="7" height="11" fill="#fff"/>
<rect x="16" y="397" width="7" height="1" fill="#0000ff"/>
<rect x="16" y="399" width="7" height="1" fill="#0000ff"/>
<rect x="16" y="401" width="7" height="1" fill="#0000ff"/>
<rect x="16" y="403" width="7" height="1" fill="#0000ff"/>
<rect x="17" y="406" width="1" height="1" fill="#f00"/><rect x="19" y="406" width="1" height="1" fill="#f00"/><rect x="21" y="406" width="1" height="1" fill="#f00"/>
<path d="M10.5 404.5H12.5V401.5L16.5 405.5L12.5 409.5V406.5H10.5Z" fill="#f00" stroke="#000" stroke-width="1" shape-rendering="auto"/>
<!-- btn4: new doc -->
<path d="M11.5 420.5H19.5L22.5 423.5V434.5H11.5Z" fill="#fff" stroke="#000" stroke-width="1.1" shape-rendering="auto"/>
<path d="M19.5 420.5V423.5H22.5" fill="none" stroke="#000" stroke-width="1" shape-rendering="auto"/>
<!-- btn5: tree -->
<rect x="11" y="444" width="2" height="1" fill="#000"/>
<rect x="11" y="447" width="1" height="11" fill="#000"/>
<rect x="11" y="447" width="3" height="1" fill="#000"/>
<rect x="13" y="450" width="3" height="1" fill="#000"/><rect x="13" y="450" width="1" height="2" fill="#000"/>
<rect x="14" y="453" width="3" height="1" fill="#000"/><rect x="14" y="453" width="1" height="2" fill="#000"/>
<rect x="11" y="457" width="3" height="1" fill="#000"/>
<rect x="16" y="447" width="2" height="1" fill="#000"/><rect x="17" y="448" width="1" height="1" fill="#000"/>
<rect x="18" y="450" width="2" height="1" fill="#000"/><rect x="18" y="451" width="1" height="1" fill="#000"/>
<rect x="19" y="453" width="2" height="1" fill="#000"/><rect x="19" y="454" width="1" height="1" fill="#000"/>
<rect x="16" y="457" width="2" height="1" fill="#000"/><rect x="16" y="458" width="1" height="1" fill="#000"/>
<!-- btn6: tree collapsed -->
<rect x="11" y="468" width="2" height="1" fill="#000"/>
<rect x="11" y="471" width="1" height="8" fill="#000"/>
<rect x="11" y="471" width="3" height="1" fill="#000"/>
<rect x="11" y="475" width="3" height="1" fill="#000"/>
<rect x="11" y="478" width="3" height="1" fill="#000"/>
<rect x="16" y="471" width="2" height="1" fill="#000"/><rect x="16" y="472" width="1" height="1" fill="#000"/>
<rect x="16" y="474" width="2" height="1" fill="#000"/><rect x="16" y="475" width="1" height="1" fill="#000"/>
<rect x="16" y="477" width="2" height="1" fill="#000"/><rect x="16" y="478" width="1" height="1" fill="#000"/>
<!-- up / down -->
<path d="M12 503.5H21.5L16.7 495Z" fill="#7f7f7f" shape-rendering="auto"/>
<path d="M12 503.5H21.5M12 503.5L16.7 495" stroke="#000" stroke-width="1" fill="none" shape-rendering="auto"/>
<path d="M12 520.5H21.5L17.3 529Z" fill="#7f7f7f" shape-rendering="auto"/>
<path d="M12 520.5H21.5M17.3 529L12 520.5" stroke="#000" stroke-width="1" fill="none" shape-rendering="auto"/>
<!-- bottom small button icon -->
<path d="M9.5 715V722.5H18.5V719" stroke="#000" stroke-width="1" fill="none"/>
<rect x="10" y="715" width="3" height="1" fill="#999"/>
<path d="M13 713.5L16 710.5H19.5" stroke="#a6d05a" stroke-width="1" fill="none" stroke-dasharray="1.5 0.8" shape-rendering="auto"/>
<path d="M15.5 715V716.5H20L20.5 716" stroke="#a6d05a" stroke-width="1" fill="none" shape-rendering="auto"/>
<rect x="22" y="711" width="1" height="6" fill="#555"/>
<!-- nav new doc -->
<path d="M129.5 790.5H137.5L140.5 793.5V803.5H129.5Z" fill="#fff" stroke="#000" stroke-width="1.1" shape-rendering="auto"/>
<path d="M137.5 790.5V793.5H140.5" fill="none" stroke="#000" stroke-width="1" shape-rendering="auto"/>
<!-- nav copy -->
<rect x="156" y="790" width="1" height="10" fill="#8cb84a"/>
<rect x="156" y="790" width="7" height="1" fill="#8cb84a"/>
<rect x="158" y="792" width="1" height="1" fill="#8cb84a"/><rect x="158" y="794" width="1" height="1" fill="#8cb84a"/><rect x="158" y="796" width="1" height="1" fill="#8cb84a"/><rect x="158" y="798" width="1" height="1" fill="#8cb84a"/>
<path d="M160.5 792.5H166.5L169.5 795.5V803.5H160.5Z" fill="#fff" stroke="#000" stroke-width="1.2" shape-rendering="auto"/>
<rect x="162" y="796" width="6" height="1" fill="#000"/><rect x="162" y="798" width="6" height="1" fill="#000"/><rect x="162" y="800" width="6" height="1" fill="#000"/>
<!-- nav save -->
<rect x="185" y="791" width="12" height="12" fill="#222"/>
<rect x="188" y="791" width="6" height="5" fill="#fff"/>
<rect x="188" y="791" width="6" height="1" fill="#8cb84a"/>
<rect x="189" y="798" width="4" height="5" fill="#fff"/>
<rect x="190" y="799" width="2" height="2" fill="#222"/>
<!-- ok check -->
<path d="M767.5 796.8L771 800.3L778.5 792.8" stroke="#1a1a1a" stroke-width="3" fill="none" shape-rendering="auto"/>
<!-- cancel x -->
<path d="M796 792L806 802M806 792L796 802" stroke="#e8899a" stroke-width="3" fill="none" shape-rendering="auto"/>
</svg>
</body></html>
